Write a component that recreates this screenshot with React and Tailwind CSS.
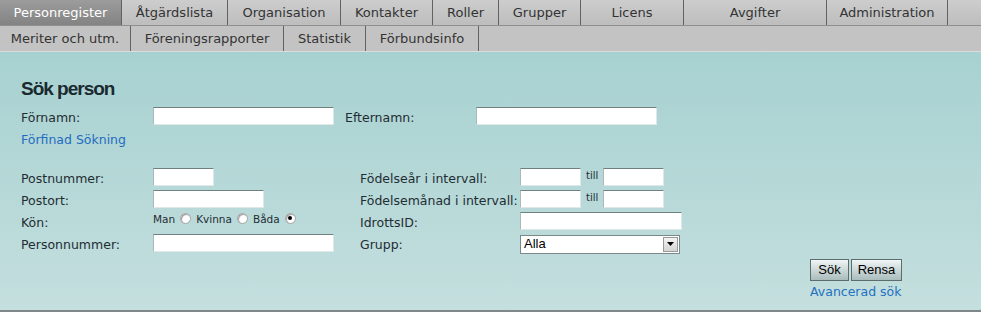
import React from 'react';

const row1 = [
  { label: 'Personregister', w: 'w-[122px]', active: true },
  { label: 'Åtgärdslista', w: 'w-[106px]' },
  { label: 'Organisation', w: 'w-[113px]' },
  { label: 'Kontakter', w: 'w-[92px]' },
  { label: 'Roller', w: 'w-[66px]' },
  { label: 'Grupper', w: 'w-[82px]' },
  { label: 'Licens', w: 'w-[103px]' },
  { label: 'Avgifter', w: 'w-[143px]' },
  { label: 'Administration', w: 'w-[121px]' },
];

const row2 = [
  { label: 'Meriter och utm.', w: 'w-[131px]' },
  { label: 'Föreningsrapporter', w: 'w-[153px]' },
  { label: 'Statistik', w: 'w-[82px]' },
  { label: 'Förbundsinfo', w: 'w-[113px]' },
];

const Tab = ({ label, w, active }) => (
  <div
    className={`${w} h-full flex items-center justify-center border-r border-[#626262] text-[13px] ${
      active ? 'bg-linear-to-b from-[#9c9c9c] to-[#838383] text-white' : 'text-[#333]'
    }`}
  >
    {label}
  </div>
);

const Input = ({ w }) => (
  <div className={`${w} h-[18px] bg-white border-t border-l border-t-[#6f8080] border-l-[#a9b9b9] border-r border-b border-r-[#dfe8e8] border-b-[#dfe8e8]`} />
);

const Label = ({ children, w }) => (
  <div className={`${w} h-[22px] pt-[3px] text-[12.5px] leading-[19px] text-[#1f2d33] whitespace-nowrap`}>{children}</div>
);

const Radio = ({ checked }) => (
  <span className="w-[11px] h-[11px] mx-[5px] -mt-[4px] rounded-full border border-[#a4a4a4] bg-white shadow-[inset_1px_1px_1px_#9c9c9c] flex items-center justify-center">
    {checked && <span className="w-[4px] h-[4px] rounded-full bg-black" />}
  </span>
);

const Row = ({ children }) => <div className="flex items-center h-[22px]">{children}</div>;

export default function App() {
  return (
    <div className="w-[981px] h-[312px] overflow-hidden bg-white" style={{ fontFamily: '"DejaVu Sans", Verdana, sans-serif' }}>
      {/* Menu rows */}
      <div className="h-[26px] flex bg-linear-to-b from-[#cdcdcd] to-[#bdbdbd] border-b border-[#8f8f8f]">
        {row1.map(t => <Tab key={t.label} {...t} />)}
      </div>
      <div className="h-[26px] flex bg-[#c3c3c3] border-b border-[#dcdcdc]">
        {row2.map(t => <Tab key={t.label} {...t} />)}
      </div>

      {/* Search panel */}
      <div className="h-[258px] bg-linear-to-b from-[#a7d1d1] to-[#c4dfde] pl-[21px] pt-[26px]">
        <h1 className="text-[19px] leading-[22px] font-bold tracking-[-1px] text-[#1a2a30]" style={{ fontFamily: '"Liberation Sans", Arial, sans-serif' }}>
          Sök person
        </h1>

        <div className="mt-[5px]">
          <Row>
            <Label w="w-[132px]">Förnamn:</Label>
            <Input w="w-[181px]" />
            <div className="w-[11px]" />
            <Label w="w-[131px]">Efternamn:</Label>
            <Input w="w-[181px]" />
          </Row>
          <div className="mt-[2px] text-[12.5px] leading-[22px] text-[#1f6cc0]">Förfinad Sökning</div>
        </div>

        <div className="mt-[15px] flex">
          <div className="w-[339px]">
            <Row>
              <Label w="w-[132px]">Postnummer:</Label>
              <Input w="w-[61px]" />
            </Row>
            <Row>
              <Label w="w-[132px]">Postort:</Label>
              <Input w="w-[111px]" />
            </Row>
            <Row>
              <Label w="w-[132px]">Kön:</Label>
              <div className="flex items-center text-[10.5px] text-[#1f2d33] -mt-[2px]">
                <span>Man</span>
                <Radio />
                <span>Kvinna</span>
                <Radio />
                <span>Båda</span>
                <Radio checked />
              </div>
            </Row>
            <Row>
              <Label w="w-[132px]">Personnummer:</Label>
              <Input w="w-[181px]" />
            </Row>
          </div>
          <div>
            <Row>
              <Label w="w-[160px]">Födelseår i intervall:</Label>
              <Input w="w-[61px]" />
              <span className="w-[22px] pl-[5px] text-[10px] text-[#1f2d33] -mt-[4px]">till</span>
              <Input w="w-[61px]" />
            </Row>
            <Row>
              <Label w="w-[160px]">Födelsemånad i intervall:</Label>
              <Input w="w-[61px]" />
              <span className="w-[22px] pl-[5px] text-[10px] text-[#1f2d33] -mt-[4px]">till</span>
              <Input w="w-[61px]" />
            </Row>
            <Row>
              <Label w="w-[160px]">IdrottsID:</Label>
              <Input w="w-[162px]" />
            </Row>
            <Row>
              <Label w="w-[160px]">Grupp:</Label>
              <div className="w-[160px] h-[19px] mt-[2px] bg-white border border-[#7a8a8a] flex items-center justify-between pl-[3px] pr-[1px]">
                <span className="text-[13px] text-black" style={{ fontFamily: '"Liberation Sans", Arial, sans-serif' }}>Alla</span>
                <span className="w-[15px] h-[15px] bg-linear-to-b from-[#f4f4f4] to-[#d4d4d4] border border-[#9a9a9a] flex items-center justify-center">
                  <svg width="7" height="4" viewBox="0 0 7 4"><path d="M0 0h7L3.5 4z" fill="#000" /></svg>
                </span>
              </div>
            </Row>
          </div>
        </div>

        <div className="flex justify-end pr-[79px] mt-[5px]">
          <div className="flex flex-col items-start">
            <div className="flex gap-[2px]">
              {[['Sök', 'w-[39px]'], ['Rensa', 'w-[51px]']].map(([b, w]) => (
                <div
                  key={b}
                  className={`${w} h-[22px] flex items-center justify-center border border-[#5d6d6d] bg-linear-to-b from-[#f0f5f5] to-[#a9bcbc] text-[13px] text-black`}
                  style={{ fontFamily: '"Liberation Sans", Arial, sans-serif' }}
                >
                  {b}
                </div>
              ))}
            </div>
            <div className="text-[12.5px] leading-[22px] text-[#2471c2] whitespace-nowrap">Avancerad sök</div>
          </div>
        </div>
      </div>
      <div className="h-[2px] bg-[#7f8888]" />
    </div>
  );
}
